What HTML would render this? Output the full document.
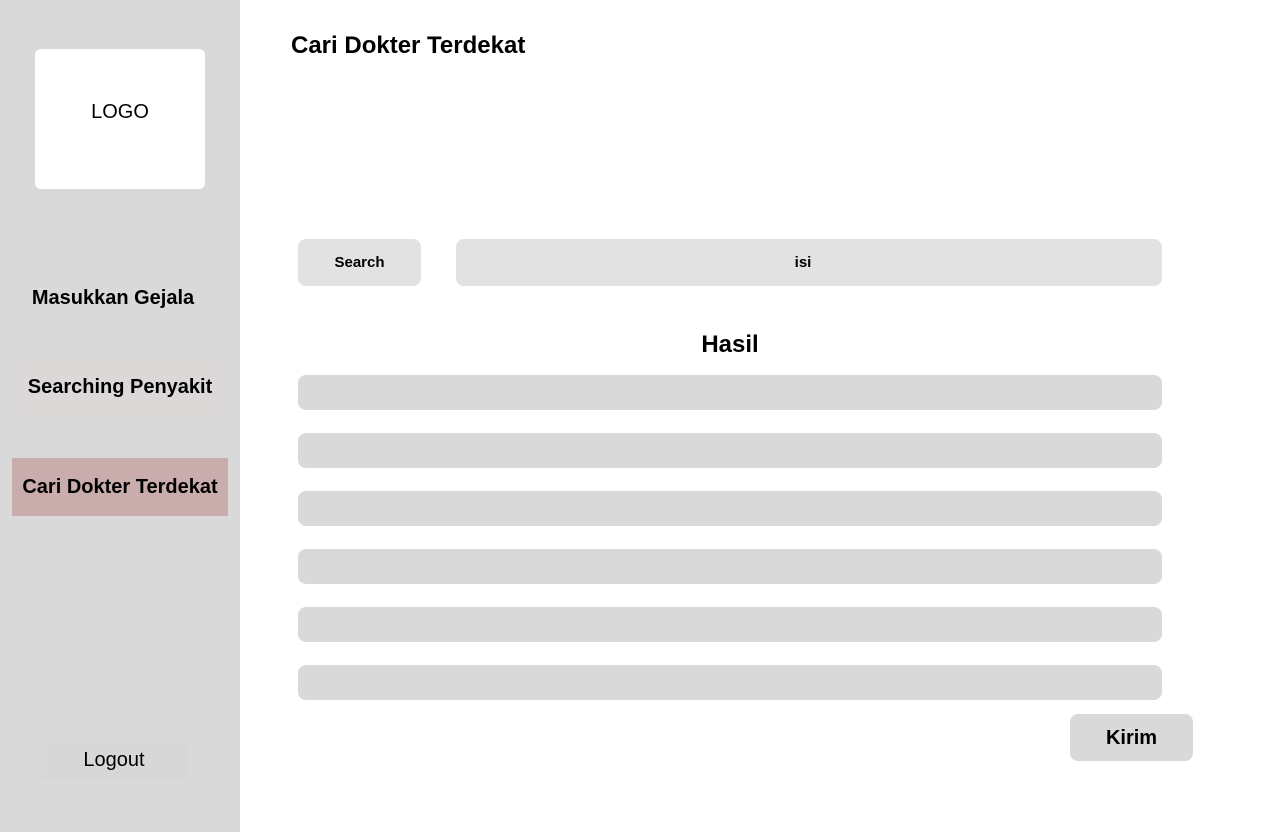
<!DOCTYPE html>
<html><head><meta charset="utf-8"><style>
*{margin:0;padding:0;box-sizing:border-box}
body{width:1280px;height:832px;background:#fff;font-family:"Liberation Sans",sans-serif;position:relative;overflow:hidden;color:#000}
.abs{position:absolute;display:flex;align-items:center;justify-content:center}
.side{position:absolute;left:0;top:0;width:240px;height:832px;background:#d9d9d9}
.row{position:absolute;left:298px;width:864px;height:35px;background:#d9d9d9;border-radius:8px}
</style></head><body>
<div class="side"></div>
<div class="abs" style="left:35px;top:49px;width:170px;height:140px;background:#fff;border-radius:6px;font-size:20px;padding-bottom:14px">LOGO</div>
<div class="abs" style="left:20px;top:280px;width:186px;height:36px;font-size:20px;font-weight:bold">Masukkan Gejala</div>
<div class="abs" style="left:19px;top:358px;width:202px;height:58px;background:#dcd8d8;font-size:20px;font-weight:bold">Searching Penyakit</div>
<div class="abs" style="left:12px;top:458px;width:216px;height:58px;background:#c9adad;font-size:20px;font-weight:bold">Cari Dokter Terdekat</div>
<div class="abs" style="left:41px;top:742px;width:146px;height:37px;background:#d7d7d7;font-size:20px">Logout</div>
<div style="position:absolute;left:291px;top:32px;font-size:24px;font-weight:bold">Cari Dokter Terdekat</div>
<div class="abs" style="left:298px;top:239px;width:123px;height:47px;background:#e2e2e2;border-radius:8px;font-size:15px;font-weight:bold">Search</div>
<div class="abs" style="left:456px;top:239px;width:706px;height:47px;background:#e2e2e2;border-radius:8px;font-size:15px;font-weight:bold;padding-right:12px">isi</div>
<div class="abs" style="left:630px;top:329px;width:200px;height:32px;font-size:24px;font-weight:bold">Hasil</div>
<div class="row" style="top:375px"></div>
<div class="row" style="top:433px"></div>
<div class="row" style="top:491px"></div>
<div class="row" style="top:549px"></div>
<div class="row" style="top:607px"></div>
<div class="row" style="top:665px"></div>
<div class="abs" style="left:1070px;top:714px;width:123px;height:47px;background:#d9d9d9;border-radius:8px;font-size:20px;font-weight:bold;padding-top:2px">Kirim</div>
</body></html>
